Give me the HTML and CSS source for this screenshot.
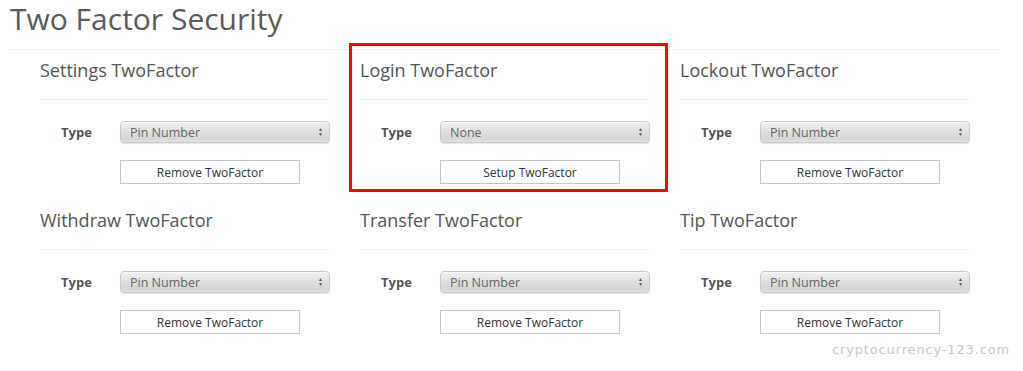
FILE: index.html
```html
<!DOCTYPE html>
<html lang="en">
<head>
    <meta charset="UTF-8">
    <title>Two Factor Security</title>
    <link rel="stylesheet" href="styles.css">
</head>
<body>
    <div class="page">
        <h1>Two Factor Security</h1>

        <div class="twofactor-grid">
            <div class="tf-section">
                <h3>Settings TwoFactor</h3>
                <div class="tf-row">
                    <label>Type</label>
                    <div class="tf-select"><span>Pin Number</span><span class="arrows">&#9650;<br>&#9660;</span></div>
                </div>
                <button class="tf-button">Remove TwoFactor</button>
            </div>

            <div class="tf-section highlight">
                <h3>Login TwoFactor</h3>
                <div class="tf-row">
                    <label>Type</label>
                    <div class="tf-select"><span>None</span><span class="arrows">&#9650;<br>&#9660;</span></div>
                </div>
                <button class="tf-button">Setup TwoFactor</button>
            </div>

            <div class="tf-section">
                <h3>Lockout TwoFactor</h3>
                <div class="tf-row">
                    <label>Type</label>
                    <div class="tf-select"><span>Pin Number</span><span class="arrows">&#9650;<br>&#9660;</span></div>
                </div>
                <button class="tf-button">Remove TwoFactor</button>
            </div>

            <div class="tf-section">
                <h3>Withdraw TwoFactor</h3>
                <div class="tf-row">
                    <label>Type</label>
                    <div class="tf-select"><span>Pin Number</span><span class="arrows">&#9650;<br>&#9660;</span></div>
                </div>
                <button class="tf-button">Remove TwoFactor</button>
            </div>

            <div class="tf-section">
                <h3>Transfer TwoFactor</h3>
                <div class="tf-row">
                    <label>Type</label>
                    <div class="tf-select"><span>Pin Number</span><span class="arrows">&#9650;<br>&#9660;</span></div>
                </div>
                <button class="tf-button">Remove TwoFactor</button>
            </div>

            <div class="tf-section">
                <h3>Tip TwoFactor</h3>
                <div class="tf-row">
                    <label>Type</label>
                    <div class="tf-select"><span>Pin Number</span><span class="arrows">&#9650;<br>&#9660;</span></div>
                </div>
                <button class="tf-button">Remove TwoFactor</button>
            </div>
        </div>
    </div>

    <div class="watermark">cryptocurrency-123.com</div>
</body>
</html>
```

FILE: styles.css
```css
body {
    margin: 0;
    font-family: 'Open Sans', 'Noto Sans', sans-serif;
    color: #555;
    background: #fff;
}

.page {
    padding: 0 23px 0 10px;
}

h1 {
    margin: 0;
    font-size: 30px;
    font-weight: 400;
    line-height: 38px;
    padding-bottom: 11px;
    border-bottom: 1px solid #eee;
    color: #5a5a5a;
}

.twofactor-grid {
    display: grid;
    grid-template-columns: repeat(3, 290px);
    column-gap: 30px;
    padding-left: 30px;
}

.tf-section {
    padding-top: 5px;
    height: 145px;
    position: relative;
}

.tf-section h3 {
    margin: 0 0 21px 0;
    font-size: 18px;
    font-weight: 400;
    line-height: 30px;
    padding-bottom: 14px;
    border-bottom: 1px solid #eee;
    color: #555;
}

.tf-row {
    display: flex;
    align-items: center;
}

.tf-row label {
    width: 59px;
    padding-left: 21px;
    font-size: 13px;
    font-weight: 700;
    color: #555;
}

.tf-select {
    width: 210px;
    height: 22px;
    box-sizing: border-box;
    display: flex;
    align-items: center;
    justify-content: space-between;
    padding: 0 6px 0 9px;
    border: 1px solid #c8c8c8;
    border-radius: 4px;
    background: linear-gradient(#f0f0f0, #dedede 55%, #d6d6d6 85%, #e4e4e4);
    box-shadow: inset 0 1px 0 #fafafa, 0 1px 1px rgba(0, 0, 0, 0.1);
    font-size: 12.5px;
    color: #666;
}

.arrows {
    font-size: 5px;
    line-height: 5px;
    color: #555;
    text-align: center;
}

.tf-button {
    display: block;
    margin: 17px 0 0 80px;
    width: 180px;
    height: 24px;
    background: #fff;
    border: 1px solid #c8c8c8;
    font-family: 'Open Sans', 'Noto Sans', sans-serif;
    font-size: 12px;
    color: #333;
    padding: 0;
}

.highlight::before {
    content: "";
    position: absolute;
    left: -11px;
    top: -7px;
    right: -18px;
    bottom: 8px;
    border: 3px solid #f00;
    pointer-events: none;
}

.watermark {
    position: absolute;
    right: 13px;
    top: 342px;
    font-family: 'DejaVu Sans', Verdana, sans-serif;
    font-size: 13px;
    color: #c8c8c8;
    letter-spacing: 0.85px;
}
```
